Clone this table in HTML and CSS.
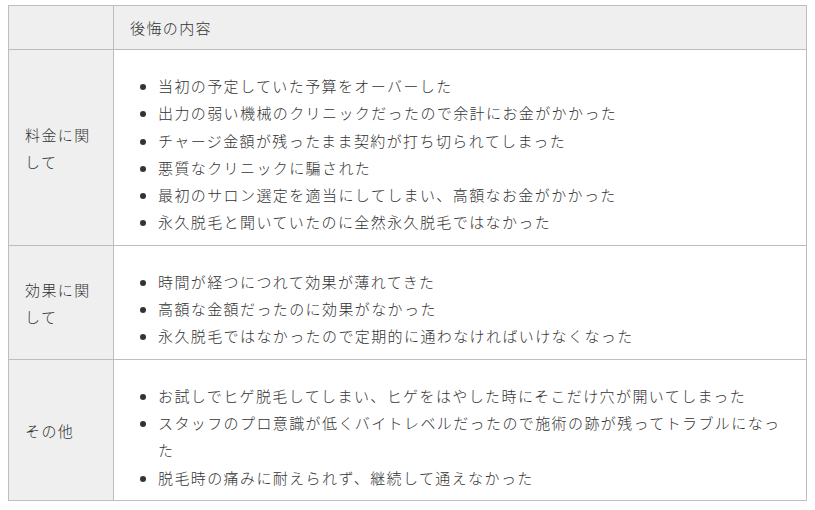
FILE: index.html
```html
<!DOCTYPE html>
<html lang="ja">
<head>
<meta charset="utf-8">
<link rel="stylesheet" href="styles.css">
</head>
<body>
<table class="regret">
  <tr class="head">
    <th class="label"></th>
    <th class="content">後悔の内容</th>
  </tr>
  <tr>
    <td class="label">料金に関して</td>
    <td class="content">
      <ul>
        <li>当初の予定していた予算をオーバーした</li>
        <li>出力の弱い機械のクリニックだったので余計にお金がかかった</li>
        <li>チャージ金額が残ったまま契約が打ち切られてしまった</li>
        <li>悪質なクリニックに騙された</li>
        <li>最初のサロン選定を適当にしてしまい、高額なお金がかかった</li>
        <li>永久脱毛と聞いていたのに全然永久脱毛ではなかった</li>
      </ul>
    </td>
  </tr>
  <tr>
    <td class="label">効果に関して</td>
    <td class="content">
      <ul>
        <li>時間が経つにつれて効果が薄れてきた</li>
        <li>高額な金額だったのに効果がなかった</li>
        <li>永久脱毛ではなかったので定期的に通わなければいけなくなった</li>
      </ul>
    </td>
  </tr>
  <tr>
    <td class="label">その他</td>
    <td class="content">
      <ul>
        <li>お試しでヒゲ脱毛してしまい、ヒゲをはやした時にそこだけ穴が開いてしまった</li>
        <li>スタッフのプロ意識が低くバイトレベルだったので施術の跡が残ってトラブルになった</li>
        <li>脱毛時の痛みに耐えられず、継続して通えなかった</li>
      </ul>
    </td>
  </tr>
</table>
</body>
</html>
```
FILE: styles.css
```css
html, body {
  background: #ffffff;
}
body {
  margin: 5px 8px;
  font-family: "Noto Sans CJK JP", "Noto Sans", sans-serif;
  font-size: 15px;
  font-weight: 300;
  letter-spacing: 1.4px;
  line-height: 27.2px;
  color: #333333;
}
.regret {
  width: 100%;
  border-collapse: collapse;
  border: 1px solid #bdbdbd;
}
.regret th,
.regret td {
  border: 1px solid #bdbdbd;
  text-align: left;
  font-weight: 300;
  vertical-align: middle;
}
.regret th {
  padding: 8px 16px;
  background: #efefef;
}
.regret td {
  padding: 10px 16px 9.5px;
}
.regret .label {
  width: 72px;
  background: #efefef;
}
.regret td.content {
  background: #ffffff;
}
.regret ul {
  margin: 12px 0 0;
  padding-left: 28px;
}
```
